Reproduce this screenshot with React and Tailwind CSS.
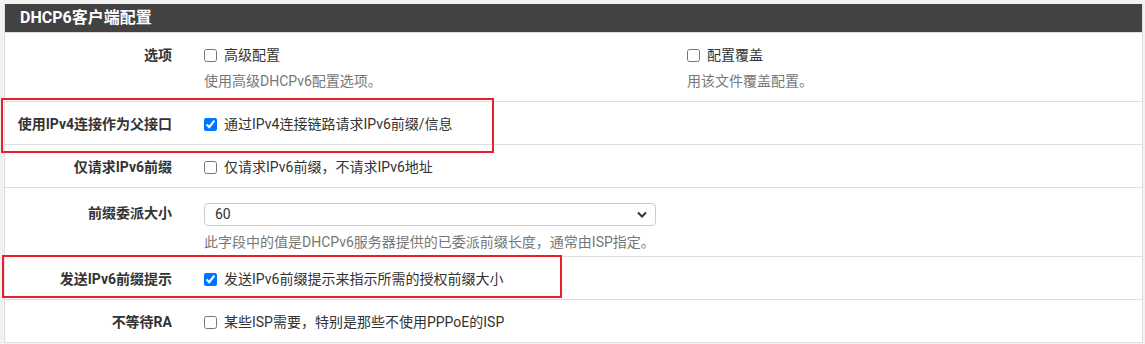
import React from 'react';

const font = { fontFamily: 'Roboto, "Noto Sans CJK SC", sans-serif' };

const Check = ({ checked, children }) => (
  <label className="flex items-center h-[20px] text-[14px] text-[#333]">
    <input type="checkbox" defaultChecked={checked} className="w-[13px] h-[13px] m-0 mr-[7px]" />
    {children}
  </label>
);

const Help = ({ children }) => (
  <p className="mt-[6px] leading-[20px] text-[14px] text-[#777]">{children}</p>
);

const Row = ({ label, children, tall }) => (
  <div className="flex border-t border-[#dedede]">
    <div className={`w-[199px] pr-[32px] text-right font-bold text-[14px] text-[#333] leading-[20px] ${tall ? 'pt-[15px]' : 'pt-[12px]'}`}>
      {label}
    </div>
    <div className="flex-1">{children}</div>
  </div>
);

export default function App() {
  return (
    <div style={font} className="relative w-[1145px] h-[344px] bg-[#f2f2f2] pt-[4px] pl-[4px] pr-[2px]">
      <div className="border-x border-b border-[#dedede] bg-white">
        {/* Header */}
        <div className="h-[28px] bg-[#424242] flex items-center pl-[15px] text-white font-bold text-[16px]">
          DHCP6客户端配置
        </div>

        <Row label="选项">
          <div className="flex pt-[12px] pb-[10px]">
            <div className="w-[483px]">
              <Check>高级配置</Check>
              <Help>使用高级DHCPv6配置选项。</Help>
            </div>
            <div>
              <Check>配置覆盖</Check>
              <Help>用该文件覆盖配置。</Help>
            </div>
          </div>
        </Row>

        <Row label="使用IPv4连接作为父接口">
          <div className="pt-[12px] pb-[10px]">
            <Check checked>通过IPv4连接链路请求IPv6前缀/信息</Check>
          </div>
        </Row>

        <Row label="仅请求IPv6前缀">
          <div className="pt-[12px] pb-[10px]">
            <Check>仅请求IPv6前缀，不请求IPv6地址</Check>
          </div>
        </Row>

        <Row label="前缀委派大小" tall>
          <div className="pt-[15px] pb-[4px]">
            <div className="w-[452px] h-[23px] border border-[#ccc] rounded-[4px] flex items-center justify-between pl-[10px] pr-[8px] text-[14px] text-[#333]">
              <span>60</span>
              <svg width="10" height="7" viewBox="0 0 10 7">
                <path d="M1 1.5 L5 5.5 L9 1.5" fill="none" stroke="#333" strokeWidth="2" />
              </svg>
            </div>
            <Help>此字段中的值是DHCPv6服务器提供的已委派前缀长度，通常由ISP指定。</Help>
          </div>
        </Row>

        <Row label="发送IPv6前缀提示">
          <div className="pt-[12px] pb-[10px]">
            <Check checked>发送IPv6前缀提示来指示所需的授权前缀大小</Check>
          </div>
        </Row>

        <Row label="不等待RA">
          <div className="pt-[12px] pb-[10px]">
            <Check>某些ISP需要，特别是那些不使用PPPoE的ISP</Check>
          </div>
        </Row>
      </div>

      {/* Highlight boxes */}
      <div className="absolute left-[1px] top-[98px] w-[493px] h-[55px] border-2 border-[#e8202a]" />
      <div className="absolute left-[2px] top-[255px] w-[560px] h-[43px] border-2 border-[#e8202a]" />
    </div>
  );
}
